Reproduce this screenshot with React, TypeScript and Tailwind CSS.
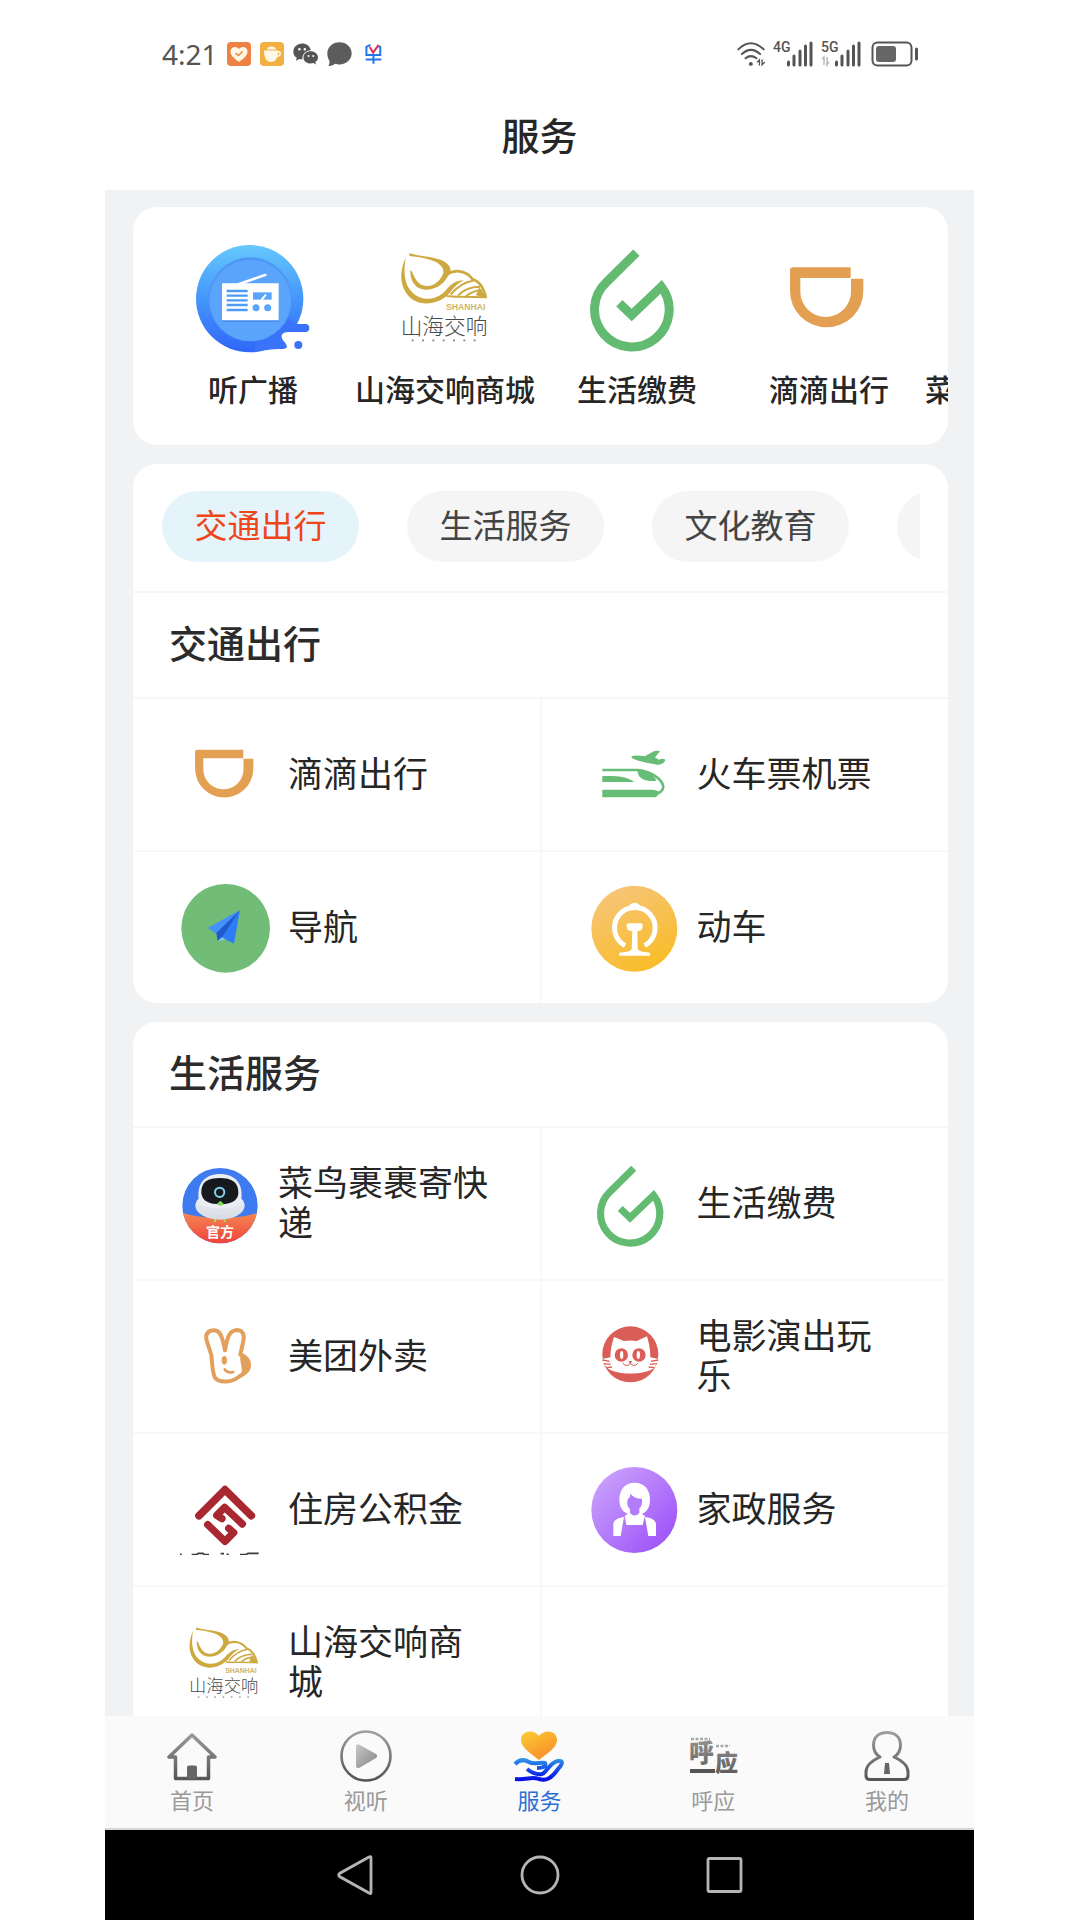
import React from "react";

type IconProps = { className: string; viewBox?: string };

const CJK = "font-['Noto_Sans_CJK_SC',sans-serif]";

/* ---------- service icons ---------- */

function RadioIcon({ className }: IconProps) {
  return (
    <svg className={className} viewBox="279 150 360 360" aria-hidden="true">
      <defs>
        <linearGradient id="radio" x1="0" y1="0" x2="0" y2="1">
          <stop offset="0" stopColor="#66c8fd" />
          <stop offset="0.5" stopColor="#4496fb" />
          <stop offset="1" stopColor="#2f66f8" />
        </linearGradient>
      </defs>
      <circle cx="449" cy="326" r="161" fill="url(#radio)" />
      <path d="M462 487 C500 478 530 477 550 477 C565 477 563 466 554 456 C538 440 544 427 564 426 H616 A12 12 0 0 0 616 402 H588 L560 380 L470 450Z" fill="#3873fa" />
      <path d="M640 426 H564 C544 427 538 440 554 456 C563 466 565 477 550 477 L560 492 H640Z" fill="#fff" />
      <circle cx="595" cy="465" r="12" fill="#3873fa" />
      <circle cx="451" cy="328" r="126" fill="#4c95f6" />
      <circle cx="451" cy="331" r="122" fill="#5aa5fb" />
      <path d="M366 385 H536 V395 H366Z" fill="#4386e8" />
      <path d="M366 280 H412 L494 251 Q501 250 500 257 L436 280 H536 V391 H366Z" fill="#fff" />
      <path d="M380 303 H443 M380 317 H443 M380 331 H443 M380 345 H443 M380 360 H443" stroke="#4e9af5" strokeWidth="7" />
      <path d="M459 307 H515 V329 H459Z" fill="#5aa5fb" />
      <path d="M484 330 L498 314" stroke="#fff" strokeWidth="6" />
      <circle cx="468" cy="353" r="10.5" fill="#5aa5fb" />
      <circle cx="503" cy="353" r="10.5" fill="#5aa5fb" />
    </svg>
  );
}

function ShellIcon({ className, viewBox = "855 150 360 360" }: IconProps) {
  return (
    <svg className={className} viewBox={viewBox} aria-hidden="true">
      <g fill="#cda940">
        <path d="M917 203 C896 248 898 300 940 330 C975 350 1018 340 1046 312 C1060 296 1072 276 1092 272 C1070 268 1052 284 1036 302 C1008 332 965 334 938 308 C912 284 910 245 917 203Z" />
        <path d="M928 190 C965 202 1015 198 1040 220 C1056 234 1054 246 1042 262 C1028 287 1000 301 975 299 C946 296 930 275 931 240 C941 244 944 288 982 288 C1005 288 1022 270 1030 250 C1034 222 1000 205 928 198Z" />
        <path d="M1138 292 L1162 326 L1128 316Z" />
      </g>
      <g fill="none" stroke="#cda940" strokeWidth="6">
        <path d="M1042 252 C1070 236 1100 244 1118 268 C1142 276 1150 296 1158 322" strokeWidth="8" />
        <path d="M1040 318 C1058 322 1100 318 1156 322" />
        <path d="M1052 314 C1068 294 1092 276 1120 272" />
        <path d="M1074 316 C1088 302 1112 290 1140 290" />
        <path d="M1098 318 C1112 308 1128 300 1146 302" />
      </g>
      <text x="1038" y="361" fontSize="26" fontWeight="700" fill="#cfb565" fontFamily="Liberation Sans, sans-serif">SHANHAI</text>
      <text x="902" y="433" fontSize="65" fontWeight="300" fill="#4a4a4a" fontFamily="Noto Sans CJK SC, sans-serif">山海交响</text>
      <path d="M935 451 H1130" stroke="#8a8a8a" strokeWidth="5" strokeDasharray="6 25" />
    </svg>
  );
}

function DropIcon({ className, viewBox = "111 150 360 360" }: IconProps) {
  return (
    <svg className={className} viewBox={viewBox} aria-hidden="true">
      <path d="M289 188 L200 276 A112 112 0 1 0 364 290 L275 375 L238 340" fill="none" stroke="#63ba71" strokeWidth="27" />
    </svg>
  );
}

function DidiIcon({ className, viewBox = "687 150 360 360" }: IconProps) {
  return (
    <svg className={className} viewBox={viewBox} aria-hidden="true">
      <path d="M758 232 H932 V264 H781 V305 A76 76 0 0 0 933 305 V266 H970 V303 A110 109 0 0 1 750 303 V240 Q750 232 758 232Z" fill="#e4a052" />
    </svg>
  );
}

function TrainIcon({ className }: IconProps) {
  return (
    <svg className={className} viewBox="144 120 270 270" aria-hidden="true">
      <g fill="#67bc76">
        <path d="M184 258 H215 C245 259 268 266 279 276 H184Z" />
        <path d="M184 299 H330 C345 299 352 303 357 308 L345 322 H184Z" />
        <path d="M288 240 C315 240 334 250 347 272 C322 276 300 270 293 256Z" />
        <path d="M272 199 C285 194 298 198 312 199 L338 184 Q350 181 357 184 L342 202 L354 209 Q368 203 373 210 C369 220 360 225 348 224 C325 220 290 214 272 204Z" />
      </g>
      <path d="M184 240 H290 C322 242 364 264 367 290 C366 304 354 311 340 311" fill="none" stroke="#67bc76" strokeWidth="8" />
    </svg>
  );
}

function NavigateIcon({ className }: IconProps) {
  return (
    <svg className={className} viewBox="240 579 270 270" aria-hidden="true">
      <circle cx="377" cy="715" r="133" fill="#71bd78" />
      <path d="M420 660 L323 714 L351 731Z" fill="#4590fb" />
      <path d="M420 660 L364 742 L402 761Z" fill="#2f7df6" />
      <path d="M420 660 L349 729 L353 754 L366 742Z" fill="#2059cf" />
      <path d="M353 754 L366 742 L376 748Z" fill="#8cc9e8" />
    </svg>
  );
}

function RailwayIcon({ className }: IconProps) {
  return (
    <svg className={className} viewBox="144 579 270 270" aria-hidden="true">
      <defs>
        <linearGradient id="rail" x1="0.2" y1="0" x2="0.7" y2="1">
          <stop offset="0" stopColor="#f6c57c" />
          <stop offset="1" stopColor="#f9bc26" />
        </linearGradient>
      </defs>
      <circle cx="280" cy="716" r="129" fill="url(#rail)" />
      <path d="M252 767 A61 61 0 1 1 311 767" fill="none" stroke="#fff" strokeWidth="15" />
      <path d="M262 650 Q270 638 281 638 Q292 638 300 650Z" fill="#fff" />
      <path d="M263 700 H300 Q306 700 305 708 L303 718 Q301 722 289 724 L290 776 Q291 783 310 786 L327 788 V797 H235 V788 L253 786 Q272 783 272 776 L274 724 Q261 722 259 718 L257 708 Q256 700 263 700Z" fill="#fff" />
    </svg>
  );
}

function CainiaoIcon({ className }: IconProps) {
  return (
    <svg className={className} viewBox="240 432 240 240" aria-hidden="true">
      <defs>
        <clipPath id="cnClip"><circle cx="360" cy="557" r="113" /></clipPath>
        <linearGradient id="cnRed" x1="0" y1="0" x2="0" y2="1">
          <stop offset="0" stopColor="#f58a52" />
          <stop offset="1" stopColor="#f0403a" />
        </linearGradient>
        <linearGradient id="cnBody" x1="0" y1="0" x2="0" y2="1">
          <stop offset="0" stopColor="#f4f5f8" />
          <stop offset="1" stopColor="#d5dae4" />
        </linearGradient>
      </defs>
      <g clipPath="url(#cnClip)">
        <path d="M240 432 H480 V672 H240Z" fill="#3f7bf0" />
        <path d="M240 575 C300 600 420 600 480 575 V672 H240Z" fill="url(#cnRed)" />
        <path d="M345 590 V606 M374 590 V606" stroke="#a4d85a" strokeWidth="6" />
        <ellipse cx="360" cy="557" rx="74" ry="42" fill="url(#cnBody)" />
        <path d="M297 545 C288 490 315 462 360 462 C405 462 432 490 423 545 C412 572 308 572 297 545Z" fill="#eceef3" />
        <path d="M304 520 C302 485 325 474 359 474 C395 474 417 487 415 522 C412 545 388 553 360 553 C330 553 307 545 304 520Z" fill="#17191f" />
        <circle cx="359" cy="517" r="14" fill="none" stroke="#79d6ee" strokeWidth="6" />
        <path d="M350 552 L361 542 L372 552 L361 558Z" fill="#7ddc4c" />
        <text x="360" y="652" textAnchor="middle" fontSize="42" fontWeight="700" fill="#fff" fontFamily="Noto Sans CJK SC, sans-serif">官方</text>
      </g>
    </svg>
  );
}

function RabbitIcon({ className }: IconProps) {
  return (
    <svg className={className} viewBox="240 876 270 270" aria-hidden="true">
      <path d="M321 965 C313 940 326 931 343 931 C360 932 366 945 375 991 C382 955 386 932 410 930 C433 931 434 950 428 972 L421 1004 C443 1010 450 1028 446 1043 C441 1060 426 1063 417 1070 C398 1088 356 1090 345 1073 C336 1055 337 1030 334 1005Z" fill="none" stroke="#e2a05c" strokeWidth="12" strokeLinejoin="round" />
      <path d="M421 1008 C445 1012 453 1026 449 1043 C445 1056 432 1062 424 1060 C430 1046 418 1024 421 1008Z" fill="#e2a05c" />
      <ellipse cx="373" cy="1021" rx="8" ry="13" fill="#e2a05c" />
      <path d="M374 1048 Q382 1061 400 1056" fill="none" stroke="#e2a05c" strokeWidth="8" strokeLinecap="round" />
    </svg>
  );
}

function CatIcon({ className }: IconProps) {
  return (
    <svg className={className} viewBox="144 876 270 270" aria-hidden="true">
      <circle cx="268" cy="1003" r="84" fill="#da5d57" />
      <path d="M219 951 L249 963 Q268 960 287 963 L318 949 C326 975 328 995 328 1012 L356 1018 L340 1043 C315 1066 222 1066 198 1043 L180 1018 L208 1012 C208 995 211 975 219 951Z" fill="#fff" />
      <g stroke="#da5d57" strokeWidth="4">
        <path d="M184 1020 L206 1024 M188 1031 L209 1033 M196 1043 L213 1041 M352 1020 L330 1024 M348 1031 L327 1033 M340 1043 L323 1041" />
      </g>
      <circle cx="241" cy="1005" r="20" fill="#da5d57" />
      <circle cx="294" cy="1005" r="20" fill="#da5d57" />
      <ellipse cx="242" cy="1005" rx="5" ry="12" fill="#fff" />
      <ellipse cx="292" cy="1005" rx="5" ry="12" fill="#fff" />
      <path d="M262 1023 H274 L268 1031Z" fill="#da5d57" />
      <path d="M245 1029 Q252 1039 261 1036 Q267 1034 268 1028 Q269 1034 276 1036 Q286 1038 291 1029" fill="none" stroke="#da5d57" strokeWidth="3" />
    </svg>
  );
}

function HousingFundIcon({ className }: IconProps) {
  return (
    <svg className={className} viewBox="240 135 270 270" aria-hidden="true">
      <g fill="none" stroke="#a92730" strokeLinecap="round" strokeLinejoin="round">
        <path d="M297 287 L375 209 L454 287" strokeWidth="23" />
        <path d="M366 296 L350 286 L374 262 L427 312" strokeWidth="22" />
        <path d="M323 314 L375 364 L401 338 L386 325" strokeWidth="22" />
      </g>
      <path d="M240 403 h5 M275 404 h14 l6 -4 h14 l4 4 h14 M362 401 h10 M380 403 h6 M420 404 h18 l6 -4 h32" fill="none" stroke="#3a3a3a" strokeWidth="5" />
    </svg>
  );
}

function HousekeeperIcon({ className }: IconProps) {
  return (
    <svg className={className} viewBox="144 135 270 270" aria-hidden="true">
      <defs>
        <linearGradient id="maid" x1="0.1" y1="0.1" x2="0.85" y2="0.85">
          <stop offset="0" stopColor="#c9a0fc" />
          <stop offset="1" stopColor="#a158f8" />
        </linearGradient>
      </defs>
      <circle cx="280" cy="270" r="129" fill="url(#maid)" />
      <path d="M281 188 C312 188 327 212 327 238 C327 262 318 276 303 282 L312 288 L305 315 H256 L251 288 L260 282 C244 274 235 262 235 238 C235 212 250 188 281 188Z" fill="#fff" />
      <path d="M268 221 C277 232 290 236 303 236 C305 250 301 260 295 266 V279 Q281 294 267 279 V268 C258 258 257 246 261 237 Q268 232 268 221Z" fill="#b37dfa" />
      <path d="M249 291 L239 348 H217 V312 C218 298 235 293 249 291Z M312 291 L322 348 H345 V312 C344 298 327 293 312 291Z" fill="#fff" />
    </svg>
  );
}

/* ---------- status bar ---------- */

function SignalIcon({ label, traffic }: { label: string; traffic?: boolean }) {
  return (
    <svg className="h-[26px] w-10" viewBox="0 0 40 26" aria-hidden="true">
      <text x="0" y="11" fontSize="14" fontWeight="500" fill="#555" fontFamily="Roboto, sans-serif">{label}</text>
      {traffic && <path d="M3 24 V16 L1 18 M6 16 V24 L8 21" fill="none" stroke="#bbb" strokeWidth="1.5" />}
      <path d="M15.5 21 V24 M21 15 V24 M27 10 V24 M32.5 5 V24 M38 2 V24" stroke="#555" strokeWidth="3" strokeLinecap="round" />
    </svg>
  );
}

function StatusBar() {
  return (
    <div className="flex h-7 items-center justify-between pr-[55px] pl-[57px]">
      <div className="flex items-center gap-[9px]">
        <span className="font-['Noto_Sans',sans-serif] text-[28px] leading-7 text-[#555]">4:21</span>
        <svg className="size-6" viewBox="0 0 24 24" aria-hidden="true">
          <rect width="24" height="24" rx="4" fill="#ee8245" />
          <path d="M12 20 C8 17 3.500 14 3.500 9.500 C3.500 4.500 9.500 3.500 12 7 C14.500 3.500 20.500 4.500 20.500 9.500 C20.500 14 16 17 12 20Z" fill="#fff6e4" />
          <path d="M8.500 11 L11.500 13.500 L15.500 9.500" fill="none" stroke="#ee8245" strokeWidth="1.600" />
        </svg>
        <svg className="size-6" viewBox="0 0 24 24" aria-hidden="true">
          <rect width="24" height="24" rx="4" fill="#f2b040" />
          <path d="M4 8.500 H18 C18 16 16 20 11 20 C6 20 4 15 4 8.500Z M7 7.500 C7 3.500 16 3.500 16 7.500Z" fill="#fff8e8" />
          <path d="M17 10 C21.500 8.500 21.500 14 16.500 14.500" fill="none" stroke="#fff8e8" strokeWidth="1.600" />
        </svg>
        <svg className="h-6 w-[25px]" viewBox="580 127 74 70" aria-hidden="true">
          <path d="M607 131 C592 131 581 142 581 155 C581 163 585 169 591 173 L589 182 L599 177 C602 178 605 178 608 178 C606 164 617 151 633 151 C630 139 620 131 607 131Z" fill="#555" />
          <path d="M632 154 C620 154 611 162 611 172 C611 182 620 190 632 190 L640 189 L648 193 L646 186 C651 182 654 178 654 172 C654 162 644 154 632 154Z" fill="#555" />
          <g fill="#fff"><circle cx="599" cy="148" r="3.500" /><circle cx="615" cy="148" r="3.500" /><circle cx="626" cy="168" r="3" /><circle cx="640" cy="168" r="3" /></g>
        </svg>
        <svg className="h-6 w-[25px]" viewBox="680 127 74 70" aria-hidden="true">
          <path d="M717 127 C737 127 753 141 753 160 C753 179 737 193 717 193 C712 193 708 193 704 191 C700 194 692 198 684 197 C687 193 688 188 687 182 C683 176 681 169 681 160 C681 141 697 127 717 127Z" fill="#5c5c5c" />
        </svg>
        <svg className="h-6 w-[25px]" viewBox="780 127 74 70" aria-hidden="true">
          <g fill="none" strokeWidth="6">
            <path d="M808 135 L796 141 V165 H837 V141 L830 139 M794 178 H840 M817 168 V191" stroke="#2377e8" />
            <path d="M806 141 L816 158 L832 135" stroke="#e0325c" />
          </g>
        </svg>
      </div>
      <div className="flex items-center">
        <svg className="h-[26px] w-[29px]" viewBox="597 122 88 78" aria-hidden="true">
          <g fill="none" stroke="#555" strokeWidth="6" strokeLinecap="round">
            <path d="M601 147 Q639 110 678 147 M612 161 Q639 136 667 161 M623 174 Q639 161 656 174" />
            <path d="M665 194 V179 L659 185 M673 179 V194 L680 187" strokeWidth="4" />
          </g>
          <circle cx="639" cy="191" r="6" fill="#555" />
        </svg>
        <div className="flex gap-2 pr-[10px] pl-[7px]">
          <SignalIcon label="4G" />
          <SignalIcon label="5G" traffic />
        </div>
        <svg className="h-[26px] w-12" viewBox="0 0 48 26" aria-hidden="true">
          <rect x="1.500" y="1.500" width="39" height="23" rx="5" fill="none" stroke="#555" strokeWidth="2" />
          <rect x="5" y="5" width="20" height="16" rx="3" fill="#666" />
          <path d="M45.500 8 V18" stroke="#555" strokeWidth="3" strokeLinecap="round" />
        </svg>
      </div>
    </div>
  );
}

/* ---------- content ---------- */

const shortcuts = [
  { label: "听广播", icon: <RadioIcon className="size-[120px]" /> },
  { label: "山海交响商城", icon: <ShellIcon className="size-[120px]" /> },
  { label: "生活缴费", icon: <DropIcon className="size-[120px]" /> },
  { label: "滴滴出行", icon: <DidiIcon className="size-[120px]" /> },
  { label: "菜鸟裹裹寄快递", icon: <CainiaoIcon className="size-[120px]" /> },
];

type Service = { label: string; icon: React.ReactNode; wide?: boolean };

const travel: Service[] = [
  { label: "滴滴出行", icon: <DidiIcon className="size-[90px] shrink-0" viewBox="693 157 340 340" /> },
  { label: "火车票机票", icon: <TrainIcon className="size-[90px] shrink-0" /> },
  { label: "导航", icon: <NavigateIcon className="size-[90px] shrink-0" /> },
  { label: "动车", icon: <RailwayIcon className="size-[90px] shrink-0" /> },
];

const living: Service[] = [
  { label: "菜鸟裹裹寄快递", icon: <CainiaoIcon className="size-20 shrink-0" />, wide: true },
  { label: "生活缴费", icon: <DropIcon className="size-[90px] shrink-0" viewBox="120 153 340 340" /> },
  { label: "美团外卖", icon: <RabbitIcon className="size-[90px] shrink-0" /> },
  { label: "电影演出玩乐", icon: <CatIcon className="size-[90px] shrink-0" /> },
  { label: "住房公积金", icon: <HousingFundIcon className="size-[90px] shrink-0" /> },
  { label: "家政服务", icon: <HousekeeperIcon className="size-[90px] shrink-0" /> },
  { label: "山海交响商城", icon: <ShellIcon className="size-[90px] shrink-0" viewBox="868 154 338 338" /> },
];

function SectionTitle({ children }: { children: React.ReactNode }) {
  return (
    <h2 className="border-b-2 border-[#f7f7f7] px-9 pt-[21px] pb-[27px] text-[38px] leading-[56px] font-medium text-[#2b2b2b]">
      {children}
    </h2>
  );
}

function ServiceGrid({ items }: { items: Service[] }) {
  return (
    <ul className="grid grid-cols-2 gap-0.5 bg-[#f8f8f8]">
      {items.map((s) => (
        <li key={s.label} className="bg-white">
          <button type="button" className="flex min-h-[151px] w-full items-center gap-[18px] pl-[47px] text-left">
            {s.icon}
            <span className={`pb-[5px] text-[35px] leading-10 text-[#262626] ${s.wide ? "w-[212px]" : "w-[178px]"}`}>{s.label}</span>
          </button>
        </li>
      ))}
      {items.length % 2 === 1 && <li className="bg-white" />}
    </ul>
  );
}

const pill = "h-[71px] w-[197px] shrink-0 rounded-full pb-[3px] text-[33px]";

function Categories() {
  return (
    <div className="border-b-2 border-[#f6f6f6] pt-[27px] pr-7 pb-[29px] pl-[29px]">
      <div className="flex gap-12 overflow-hidden">
        <button type="button" className={`${pill} bg-[#e5f4fb] text-[#ee4519]`}>交通出行</button>
        <button type="button" className={`${pill} bg-[#f5f5f5] text-[#444]`}>生活服务</button>
        <button type="button" className={`${pill} bg-[#f5f5f5] text-[#444]`}>文化教育</button>
        <button type="button" aria-label="更多分类" className={`${pill} bg-[#f5f5f5]`} />
      </div>
    </div>
  );
}

/* ---------- bottom tabs ---------- */

function TabGradient({ id }: { id: string }) {
  return (
    <linearGradient id={id} gradientUnits="userSpaceOnUse" x1="0" y1="0" x2="0" y2="54">
      <stop offset="0" stopColor="#a2a2a2" />
      <stop offset="1" stopColor="#505050" />
    </linearGradient>
  );
}

const tabs = [
  {
    label: "首页",
    icon: (
      <svg className="size-[54px]" viewBox="0 0 54 54" aria-hidden="true">
        <defs><TabGradient id="tabHome" /></defs>
        <path d="M27 6 L4 28 H10.500 V49.500 H43.500 V28 H50 Z" fill="none" stroke="url(#tabHome)" strokeWidth="3.500" strokeLinejoin="round" />
        <path d="M22 50 V38 Q22 36.500 24 36.500 H30 Q32 36.500 32 38 V50Z" fill="#666" />
      </svg>
    ),
  },
  {
    label: "视听",
    icon: (
      <svg className="size-[54px]" viewBox="0 0 54 54" aria-hidden="true">
        <defs>
          <TabGradient id="tabPlay" />
          <linearGradient id="tabTri" x1="0" y1="0" x2="1" y2="1">
            <stop offset="0" stopColor="#c8c8c8" /><stop offset="1" stopColor="#858585" />
          </linearGradient>
        </defs>
        <circle cx="27" cy="27" r="24.500" fill="none" stroke="url(#tabPlay)" strokeWidth="2.600" />
        <path d="M17 18 Q17 14 21 16 L37 25 Q39.500 27 37 29 L21 38.500 Q17 40 17 37Z" fill="url(#tabTri)" />
      </svg>
    ),
  },
  {
    label: "服务",
    icon: (
      <svg className="size-[54px]" viewBox="0 0 54 54" aria-hidden="true">
        <defs>
          <linearGradient id="tabHeart" x1="0.2" y1="0" x2="0.8" y2="1">
            <stop offset="0" stopColor="#f9c832" /><stop offset="1" stopColor="#f8892a" />
          </linearGradient>
          <linearGradient id="tabHand" gradientUnits="userSpaceOnUse" x1="0" y1="30" x2="0" y2="52">
            <stop offset="0" stopColor="#3095e6" /><stop offset="0.55" stopColor="#1240e8" /><stop offset="1" stopColor="#0808e6" />
          </linearGradient>
        </defs>
        <path d="M27 31 C20 25 9 19 9 11 C9 1 22 0 27 7 C32 0 45 1 45 11 C45 19 34 25 27 31Z" fill="url(#tabHeart)" />
        <path d="M3 35 C7 31 12 30 17 33 C22 36 27 33 33 34 C35 38 29 39 25 39 M15 40 C20 44 24 46 30 45 C35 43 38 33 46 32 C53 31 49 37 46 40 C39 50 34 52 27 50 C20 47 15 51 3 50" fill="none" stroke="url(#tabHand)" strokeWidth="4" strokeLinejoin="round" />
      </svg>
    ),
  },
  {
    label: "呼应",
    icon: (
      <svg className="size-[54px]" viewBox="0 0 54 54" aria-hidden="true">
        <defs><TabGradient id="tabCall" /></defs>
        <g fill="url(#tabCall)" fontFamily="Noto Sans CJK SC, sans-serif" fontWeight="900">
          <text x="3" y="33" fontSize="25">呼</text>
          <text x="29" y="42" fontSize="23">应</text>
        </g>
        <path d="M5 10 H24 M30 17 H44" stroke="#aaa" strokeWidth="2.500" strokeDasharray="3 1.500" />
        <path d="M4 42 H29" stroke="#555" strokeWidth="4" />
      </svg>
    ),
  },
  {
    label: "我的",
    icon: (
      <svg className="size-[54px]" viewBox="0 0 54 54" aria-hidden="true">
        <defs><TabGradient id="tabMe" /></defs>
        <path d="M20 28 C15 25 13.500 21 13.500 16 C13.500 8 19 3.500 27 3.500 C35 3.500 40.500 8 40.500 16 C40.500 21 39 25 34 28 C43 32 48 37 48 43 V47 Q48 50.500 44 50.500 H10 Q6 50.500 6 47 V43 C6 37 11 32 20 28Z" fill="none" stroke="url(#tabMe)" strokeWidth="3" strokeLinejoin="round" />
        <path d="M25 34 H29 L30 45 H24Z" fill="#666" />
      </svg>
    ),
  },
];

export default function App() {
  return (
    <div className="min-h-screen bg-white pr-[106px] pl-[105px]">
      <div className={`flex h-screen flex-col bg-[#f0f2f4] ${CJK}`}>
        <header className="bg-white pt-10 pb-7">
          <StatusBar />
          <h1 className="mt-[38px] text-center text-[38px] leading-[56px] font-medium text-[#262626]">服务</h1>
        </header>

        <main className="flex min-h-0 flex-1 flex-col gap-[19px] overflow-hidden pt-[17px] pr-[26px] pl-7">
          <section className="shrink-0 overflow-hidden rounded-3xl bg-white pt-[33px] pb-[37px] pl-6">
            <ul className="flex">
              {shortcuts.map((s) => (
                <li key={s.label} className="min-w-48 shrink-0">
                  <button type="button" className="flex w-full flex-col items-center gap-2">
                    {s.icon}
                    <span className="text-[30px] leading-10 font-medium whitespace-nowrap text-[#262626]">{s.label}</span>
                  </button>
                </li>
              ))}
            </ul>
          </section>

          <section className="shrink-0 overflow-hidden rounded-3xl bg-white">
            <Categories />
            <SectionTitle>交通出行</SectionTitle>
            <ServiceGrid items={travel} />
          </section>

          <section className="shrink-0 overflow-hidden rounded-3xl bg-white">
            <SectionTitle>生活服务</SectionTitle>
            <ServiceGrid items={living} />
          </section>
        </main>

        <nav className="grid grid-cols-5 border-b-2 border-[#d8d8d8] bg-[#fafafa]" aria-label="主导航">
          {tabs.map((t) => (
            <a
              key={t.label}
              href="#"
              className={`flex flex-col items-center gap-0.5 pt-[13px] pb-[15px] text-[22px] leading-7 ${
                t.label === "服务" ? "text-[#2a6fd6]" : "text-[#999]"
              }`}
            >
              {t.icon}
              {t.label}
            </a>
          ))}
        </nav>

        <div className="flex justify-center gap-[140px] bg-black py-[23px]">
          <button type="button" aria-label="返回">
            <svg className="size-11" viewBox="0 0 44 44" aria-hidden="true">
              <path d="M37 4.500 V39.500 Q37 41.500 35 40 L5.500 23.500 Q4 22 5.500 20.500 L35 4 Q37 3 37 4.500Z" fill="none" stroke="#b5b5b5" strokeWidth="2.800" />
            </svg>
          </button>
          <button type="button" aria-label="主屏幕">
            <svg className="size-11" viewBox="0 0 44 44" aria-hidden="true">
              <circle cx="22" cy="22" r="18" fill="none" stroke="#b5b5b5" strokeWidth="2.800" />
            </svg>
          </button>
          <button type="button" aria-label="最近任务">
            <svg className="size-11" viewBox="0 0 44 44" aria-hidden="true">
              <rect x="6" y="5.500" width="33" height="33" rx="1.500" fill="none" stroke="#b5b5b5" strokeWidth="2.800" />
            </svg>
          </button>
        </div>
      </div>
    </div>
  );
}
